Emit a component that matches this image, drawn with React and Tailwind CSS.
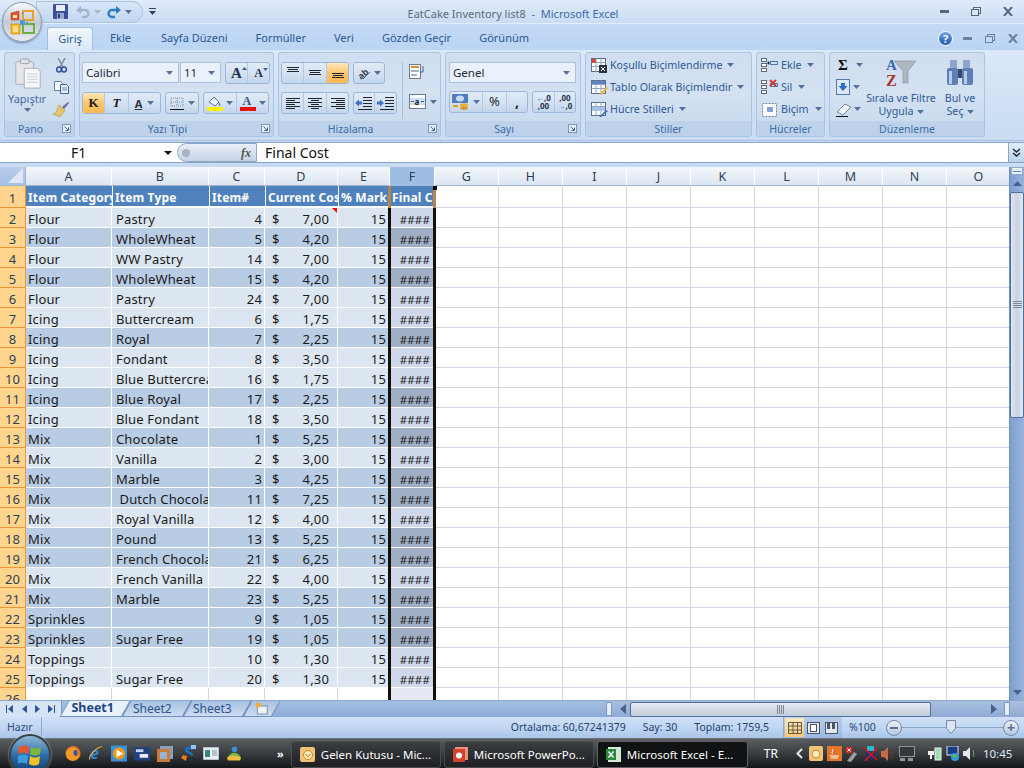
import React from 'react';

const font = { fontFamily: '"Noto Sans", sans-serif' };

// [category, type, item, cost, dark band]
const rows = [
  ['Flour', 'Pastry', 4, '7,00', 0],
  ['Flour', 'WholeWheat', 5, '4,20', 1],
  ['Flour', 'WW Pastry', 14, '7,00', 0],
  ['Flour', 'WholeWheat', 15, '4,20', 1],
  ['Flour', 'Pastry', 24, '7,00', 0],
  ['Icing', 'Buttercream', 6, '1,75', 0],
  ['Icing', 'Royal', 7, '2,25', 1],
  ['Icing', 'Fondant', 8, '3,50', 0],
  ['Icing', 'Blue Buttercream', 16, '1,75', 0],
  ['Icing', 'Blue Royal', 17, '2,25', 1],
  ['Icing', 'Blue Fondant', 18, '3,50', 0],
  ['Mix', 'Chocolate', 1, '5,25', 1],
  ['Mix', 'Vanilla', 2, '3,00', 0],
  ['Mix', 'Marble', 3, '4,25', 1],
  ['Mix', '\u00a0Dutch Chocolate', 11, '7,25', 1],
  ['Mix', 'Royal Vanilla', 12, '4,00', 0],
  ['Mix', 'Pound', 13, '5,25', 1],
  ['Mix', 'French Chocolate', 21, '6,25', 1],
  ['Mix', 'French Vanilla', 22, '4,00', 0],
  ['Mix', 'Marble', 23, '5,25', 1],
  ['Sprinkles', '', 9, '1,05', 1],
  ['Sprinkles', 'Sugar Free', 19, '1,05', 1],
  ['Toppings', '', 10, '1,30', 0],
  ['Toppings', 'Sugar Free', 20, '1,30', 0],
];

const extraCols = ['G', 'H', 'I', 'J', 'K', 'L', 'M', 'N', 'O'];

const Caret = ({ className = 'text-[#56719c]' }) => (
  <svg width="7" height="4" viewBox="0 0 7 4" className={`shrink-0 ${className}`}><path d="M0 0h7L3.5 4z" fill="currentColor" /></svg>
);

const Launcher = () => (
  <svg width="9" height="9" viewBox="0 0 9 9" className="shrink-0">
    <rect x="0.5" y="0.5" width="8" height="8" fill="#e6eef8" stroke="#7c97bd" />
    <path d="M2.5 2.5l3.5 3.5M6.5 3.5v3h-3" fill="none" stroke="#49648c" />
  </svg>
);

const Group = ({ width, label, launcher, className = '', children }) => (
  <div className="flex flex-col shrink-0 h-[85px] rounded-[3px] border border-[#a9c4e4] bg-linear-to-b from-[#cfdef0] via-[#d3e1f1] to-[#c6d9ee]" style={{ width }}>
    <div className={`h-[68px] ${className}`}>{children}</div>
    <div className={`h-[15px] flex items-center justify-center relative pt-[2px] bg-linear-to-b from-[#bed2e9] to-[#bdd1ea] rounded-b-[3px] text-[10.5px] text-[#3e6aaa] ${launcher ? 'pr-[18px]' : ''}`}>
      {label}
      {launcher && <span className="absolute right-[3px] top-[3px] flex"><Launcher /></span>}
    </div>
  </div>
);

const BtnRow = ({ className = '', children }) => (
  <div className={`flex h-[22px] rounded-[3px] border border-[#9db7d8] bg-linear-to-b from-[#e1ebf7] via-[#d5e2f2] to-[#c3d5ec] overflow-hidden ${className}`}>{children}</div>
);

const Btn = ({ w = 24, active, children }) => (
  <div className={`flex items-center justify-center gap-[3px] shrink-0 border-r border-[#b5c9e2] last:border-r-0 ${active ? 'bg-linear-to-b from-[#fde7b9] via-[#fbc66f] to-[#fdb84f]' : ''}`} style={{ width: w }}>{children}</div>
);

const Lines = ({ kind, valign }) => {
  const y0 = valign === 'top' ? 1 : valign === 'mid' ? 4 : 7;
  if (valign) {
    return (
      <svg width="16" height="14" viewBox="0 0 16 14">
        <path d={`M2 ${y0 + 0.5}h12M3 ${y0 + 2.5}h10M2 ${y0 + 4.5}h12`} stroke="#20242c" />
      </svg>
    );
  }
  const seg = {
    left: 'M1 1.5h14M1 3.5h9M1 5.5h14M1 7.5h9M1 9.5h14M1 11.5h9',
    center: 'M1 1.5h14M4 3.5h8M1 5.5h14M4 7.5h8M1 9.5h14M4 11.5h8',
    right: 'M1 1.5h14M6 3.5h9M1 5.5h14M6 7.5h9M1 9.5h14M6 11.5h9',
  };
  return <svg width="16" height="13" viewBox="0 0 16 13"><path d={seg[kind]} stroke="#20242c" /></svg>;
};

const Indent = ({ flip }) => (
  <svg width="18" height="15" viewBox="0 0 18 15">
    <path d="M8 1.5h9M8 4.5h9M8 7.5h9M8 10.5h9M3 13.5h14" stroke="#20242c" />
    <path d={flip ? 'M7 7L3 3.5v2H0v3h3v2z' : 'M0 7l4-3.5v2h3v3H4v2z'} fill="#3f74c6" />
  </svg>
);

const OfficeLogo = () => (
  <div className="relative w-[40px] h-[40px] rounded-full border border-[#8b9bb0] bg-linear-to-b from-[#f7f8fa] via-[#c3cad4] to-[#e8ecf0] flex items-center justify-center shadow-[0_1px_2px_#6d83a5]">
    <svg width="25" height="25" viewBox="0 0 25 25">
      <path d="M1 3l8-2v9H1z" fill="#e8552b" stroke="#9c3018" strokeWidth="0.5" />
      <path d="M3 5h4v3H3z" fill="#fde6c8" />
      <path d="M13 1h10v9H13z" fill="none" stroke="#e9a028" strokeWidth="2" />
      <path d="M13 14h11v9H13z" fill="none" stroke="#6ab044" strokeWidth="2" />
      <path d="M1 14h9v10H1z" fill="#f4b826" stroke="#b87b13" strokeWidth="0.5" />
      <path d="M3 16h5v6H3z" fill="#fbe08c" />
      <path d="M10 10h5v5h-5z" fill="#4e9bd6" />
      <circle cx="12.5" cy="3" r="1" fill="#4e9bd6" /><circle cx="17" cy="12.5" r="1" fill="#4e9bd6" />
    </svg>
  </div>
);

const Save = () => (
  <svg width="15" height="15" viewBox="0 0 15 15">
    <rect width="15" height="15" rx="1" fill="#3d4f9f" />
    <rect x="3" y="1" width="9" height="6" fill="#e8edf7" />
    <rect x="4" y="9" width="7" height="6" fill="#9ba9cf" /><rect x="5" y="10" width="2" height="4" fill="#2c3a78" />
  </svg>
);

const Curve = ({ color, flip }) => (
  <svg width="14" height="14" viewBox="0 0 14 14" style={flip ? { transform: 'scaleX(-1)' } : undefined}>
    <path d="M3 5h6a3 3 0 0 1 0 7H6" fill="none" stroke={color} strokeWidth="2.4" />
    <path d="M5 1v8L0 5z" fill={color} />
  </svg>
);

const Clipboard = () => (
  <svg width="28" height="31" viewBox="0 0 28 33">
    <rect x="1" y="4" width="19" height="24" rx="1" fill="#e4e6ea" stroke="#a8adb6" />
    <rect x="6" y="1" width="9" height="5" rx="1" fill="#dfe2e6" stroke="#9aa0aa" />
    <path d="M10 11h14l3 3v18H10z" fill="#f5f7fa" stroke="#a7adb8" />
    <path d="M13 17h11M13 20h11M13 23h11M13 26h11" stroke="#c8cdd6" />
  </svg>
);

const Scissors = () => (
  <svg width="11" height="15" viewBox="0 0 11 15">
    <path d="M2 0l5 9M9 0L4 9" stroke="#7f8792" strokeWidth="1.4" />
    <circle cx="3" cy="11.5" r="2.4" fill="none" stroke="#2f4f9f" strokeWidth="1.5" />
    <circle cx="8" cy="11.5" r="2.4" fill="none" stroke="#2f4f9f" strokeWidth="1.5" />
  </svg>
);

const Copy = () => (
  <svg width="15" height="13" viewBox="0 0 15 13">
    <path d="M0.5 0.5h6l2 2v7h-8z" fill="#fff" stroke="#5a7fb3" />
    <path d="M6.5 3.5h6l2 2v7h-8z" fill="#eaf1fa" stroke="#38619e" />
    <path d="M8 7h5M8 9h5" stroke="#6a8dbd" />
  </svg>
);

const Brush = () => (
  <svg width="16" height="15" viewBox="0 0 16 15">
    <path d="M9 5l6-5 1 1-5 6z" fill="#7a5ea8" />
    <path d="M6 3l6 5-5 7-7-3c3 0 4-4 6-9z" fill="#e6c46b" stroke="#9c8239" strokeWidth="0.5" />
  </svg>
);

const Grow = ({ size, up }) => (
  <span className="relative font-bold text-[#20304a] leading-none" style={{ fontFamily: '"Liberation Serif", serif', fontSize: size }}>
    A
    <svg width="5" height="3" viewBox="0 0 5 3" className="absolute -right-[5px] top-[1px] text-[#3e5f90]"><path d={up ? 'M0 3h5L2.5 0z' : 'M0 0h5L2.5 3z'} fill="currentColor" /></svg>
  </span>
);

const Combo = ({ w, text, gap = '' }) => (
  <div className={`flex items-center justify-between h-[21px] pt-[1px] border border-[#abc1de] bg-[#eaf1fb] px-[3px] text-[11.5px] text-[#1f2a3a] ${gap}`} style={{ width: w }}>
    <span>{text}</span>
    <span className="mr-[2px] flex"><Caret /></span>
  </div>
);

const Sm = ({ w, h, children }) => <svg width={w} height={h} viewBox={`0 0 ${w} ${h}`} className="shrink-0">{children}</svg>;

const StyleIcon = ({ kind }) => (
  <Sm w={17} h={16}>
    <rect x="0.5" y="1.5" width="14" height="13" fill="#fff" stroke="#5a6d8a" />
    <path d="M0.5 5.5h14M0.5 9.5h14M5 1.5v13M10 1.5v13" stroke="#8fa4c2" />
    {kind === 'cond' && <><rect x="1" y="2" width="4" height="4" fill="#d44a3a" /><rect x="8" y="8" width="8" height="8" fill="#30363f" /><path d="M10 10l4 4M14 10l-4 4" stroke="#fff" /></>}
    {kind === 'table' && <><rect x="1" y="2" width="13" height="3" fill="#5b84c0" /><path d="M9 15l6-7 2 1-6 7z" fill="#e6b53c" /></>}
    {kind === 'cell' && <><rect x="1" y="6" width="13" height="4" fill="#a9c1e4" /><path d="M8 16l7-7 2 1-7 6z" fill="#3c6fc0" /></>}
  </Sm>
);

const CellIcon = ({ kind }) => {
  if (kind === 'format') {
    return (
      <Sm w={17} h={16}>
        <rect x="1.5" y="2.5" width="14" height="13" fill="#fff" stroke="#7d8794" strokeDasharray="2 1" />
        <rect x="6" y="6" width="6" height="5" fill="#7ba4dc" />
      </Sm>
    );
  }
  return (
    <Sm w={17} h={16}>
      <rect x="0.5" y="1.5" width="5" height="3" fill="#fff" stroke="#5d6a7c" />
      <rect x="0.5" y="6.5" width="5" height="3" fill="#fff" stroke="#5d6a7c" />
      <rect x="0.5" y="11.5" width="5" height="3" fill="#fff" stroke="#5d6a7c" />
      <rect x="9.5" y="4.5" width="7" height="3" fill="#cfe0f5" stroke="#4e78ad" />
      {kind === 'add' ? <path d="M6 6h3M7.5 4.5v3" stroke="#20242c" /> : <path d="M9 1l6 6M15 1L9 7" stroke="#d8392b" strokeWidth="2" />}
    </Sm>
  );
};

const Funnel = () => (
  <svg width="30" height="30" viewBox="0 0 30 30" className="shrink-0">
    <path d="M8 4h22l-8 10v12h-5V14z" fill="#aeb6c0" stroke="#7a828e" strokeWidth="0.5" />
    <text x="0" y="13" fontSize="15" fontWeight="700" fill="#3f68b0" fontFamily="Liberation Serif, serif">A</text>
    <text x="0" y="29" fontSize="16" fontWeight="700" fill="#a63a30" fontFamily="Liberation Serif, serif">Z</text>
  </svg>
);

const Binoculars = () => (
  <svg width="28" height="26" viewBox="0 0 28 26" className="shrink-0">
    <rect x="1" y="9" width="11" height="17" rx="2" fill="#5d7fb4" />
    <rect x="16" y="9" width="11" height="17" rx="2" fill="#5d7fb4" />
    <rect x="4" y="1" width="7" height="8" rx="1" fill="#8ea6cc" /><rect x="17" y="1" width="7" height="8" rx="1" fill="#8ea6cc" />
    <rect x="12" y="10" width="4" height="9" fill="#33496f" />
    <rect x="3" y="12" width="3" height="13" fill="#b6cbe8" /><rect x="18" y="12" width="3" height="13" fill="#b6cbe8" />
  </svg>
);

const Ribbon = () => (
  <div className="flex gap-[4px] h-[91px] pl-[4px] pt-[2px] bg-linear-to-b from-[#dbe8f8] to-[#c9dcf2] border-b border-[#a6c0de] text-[#3e6aaa]">
    <Group width={71} label="Pano" launcher className="flex pt-[5px]">
      <div className="w-[44px] flex flex-col items-center">
        <div className="h-[34px] pl-[2px]"><Clipboard /></div>
        <span className="text-[11px] leading-[13px] text-[#3e6aaa]">Yapıştır</span>
        <span className="mt-[3px] flex"><Caret /></span>
      </div>
      <div className="flex flex-col items-center gap-[8px] w-[20px] ml-[2px]">
        <Scissors /><Copy /><Brush />
      </div>
    </Group>

    <Group width={195} label="Yazı Tipi" launcher className="pt-[9px] pl-[2px]">
      <div className="flex">
        <Combo w={97} text="Calibri" />
        <Combo w={41} text="11" gap="ml-[1px]" />
        <BtnRow className="ml-[4px]">
          <Btn w={22}><Grow size={15} up /></Btn>
          <Btn w={21}><Grow size={12} /></Btn>
        </BtnRow>
      </div>
      <div className="flex mt-[8px]">
        <BtnRow>
          <Btn w={22} active><span className="font-bold text-[13px] text-[#1b1b1b]" style={{ fontFamily: '"Liberation Serif", serif' }}>K</span></Btn>
          <Btn w={24}><span className="font-bold italic text-[13px] text-[#1b1b1b]" style={{ fontFamily: '"Liberation Serif", serif' }}>T</span></Btn>
          <Btn w={31}><span className="font-bold text-[11px] underline text-[#2a3446] leading-none">A</span><span className="ml-[2px] flex"><Caret /></span></Btn>
        </BtnRow>
        <BtnRow className="ml-[4px] w-[34px]">
          <div className="flex items-center gap-[4px] pl-[4px]">
            <svg width="14" height="13" viewBox="0 0 14 13"><path d="M1 1h12v8H1zM7 1v8M1 5h12" fill="none" stroke="#7f8ea4" strokeDasharray="1 1" /><path d="M0 12.5h14" stroke="#111" /></svg>
            <Caret />
          </div>
        </BtnRow>
        <BtnRow className="ml-[4px]">
          <Btn w={33}>
            <svg width="16" height="16" viewBox="0 0 16 16"><path d="M2 7l5-5 5 5-4 4z" fill="#eef2f8" stroke="#6b7686" /><path d="M12 7c1 2 2 3 1 4-1 0-2-1-1-4z" fill="#5e7fb3" /><rect y="12" width="16" height="4" fill="#fff200" /></svg>
            <Caret />
          </Btn>
          <Btn w={31}>
            <svg width="16" height="16" viewBox="0 0 16 16"><text x="2.5" y="10" fontSize="12" fontWeight="700" fill="#39507a" fontFamily="Liberation Serif, serif">A</text><rect y="12" width="16" height="4" fill="#e80d0d" /></svg>
            <Caret />
          </Btn>
        </BtnRow>
      </div>
    </Group>

    <Group width={163} label="Hizalama" launcher className="flex pt-[9px] pl-[2px]">
      <div className="flex flex-col gap-[8px]">
        <div className="flex gap-[4px]">
          <BtnRow>
            <Btn w={22}><Lines valign="top" /></Btn>
            <Btn w={23}><Lines valign="mid" /></Btn>
            <Btn w={21} active><Lines valign="bot" /></Btn>
          </BtnRow>
          <BtnRow>
            <Btn w={30}>
              <svg width="14" height="14" viewBox="0 0 14 14"><text x="0" y="11" fontSize="9" fontWeight="700" fill="#3a4656" transform="rotate(-40 6 7)">ab</text><path d="M6 13l7-7" stroke="#5a6a80" /></svg>
              <Caret />
            </Btn>
          </BtnRow>
        </div>
        <div className="flex gap-[4px]">
          <BtnRow>
            <Btn w={22}><Lines kind="left" /></Btn>
            <Btn w={23}><Lines kind="center" /></Btn>
            <Btn w={21}><Lines kind="right" /></Btn>
          </BtnRow>
          <BtnRow>
            <Btn w={21}><Indent /></Btn>
            <Btn w={21}><Indent flip /></Btn>
          </BtnRow>
        </div>
      </div>
      <div className="w-px h-[57px] bg-[#a9bfdb] mx-[5px]" />
      <div className="flex flex-col gap-[15px] pl-[1px] pt-[2px]">
        <svg width="17" height="15" viewBox="0 0 17 15"><rect x="0.5" y="0.5" width="11" height="14" fill="#fff" stroke="#6d7a8c" /><path d="M2 3h8" stroke="#d08b3c" strokeWidth="2" /><path d="M2 7h8M2 11h6" stroke="#50627c" /><path d="M14 2v6h-3" fill="none" stroke="#3e5f90" /></svg>
        <div className="flex items-center gap-[4px]">
          <svg width="17" height="15" viewBox="0 0 17 15"><rect x="0.5" y="0.5" width="16" height="14" fill="#fff" stroke="#6d7a8c" /><rect x="1" y="4" width="15" height="7" fill="#cfdff3" /><text x="5.5" y="10.5" fontSize="8" fontWeight="700" fill="#222">a</text><path d="M2 7.5h3M12 7.5h3" stroke="#3b5f96" /></svg>
          <Caret />
        </div>
      </div>
    </Group>

    <Group width={136} label="Sayı" launcher className="pt-[9px] pl-[3px]">
      <Combo w={127} text="Genel" />
      <div className="flex gap-[4px] mt-[8px]">
        <BtnRow>
          <Btn w={33}>
            <svg width="18" height="17" viewBox="0 0 18 17"><rect width="16" height="9" fill="#4f7dbf" /><ellipse cx="8" cy="4.5" rx="4" ry="3" fill="#c9dcf3" /><ellipse cx="12" cy="11" rx="4" ry="1.8" fill="#e8b130" /><ellipse cx="12" cy="14" rx="4" ry="1.8" fill="#d79a1e" /><path d="M1 12h5" stroke="#d79a1e" strokeWidth="2" /></svg>
            <Caret />
          </Btn>
          <Btn w={24}><span className="text-[13px] text-[#1f2a3a]">%</span></Btn>
          <Btn w={20}><span className="text-[14px] font-bold text-[#1f2a3a] leading-none">,</span></Btn>
        </BtnRow>
        <BtnRow>
          <Btn w={22}><span className="text-[8px] font-bold leading-[8px] text-[#26354e] text-center"><span className="text-[#3c74c8]">←</span>,0<br />,00</span></Btn>
          <Btn w={20}><span className="text-[8px] font-bold leading-[8px] text-[#26354e] text-center">,00<br /><span className="text-[#3c74c8]">→</span>,0</span></Btn>
        </BtnRow>
      </div>
    </Group>

    <Group width={167} label="Stiller" className="flex flex-col gap-[6px] pt-[4px] pl-[5px] text-[10.7px] text-[#2f5a96]">
      <div className="flex items-center h-[16px] gap-[2px]"><StyleIcon kind="cond" /><span>Koşullu Biçimlendirme</span><span className="ml-[3px] flex"><Caret /></span></div>
      <div className="flex items-center h-[16px] gap-[2px]"><StyleIcon kind="table" /><span>Tablo Olarak Biçimlendir</span><span className="ml-[3px] flex"><Caret /></span></div>
      <div className="flex items-center h-[16px] gap-[2px]"><StyleIcon kind="cell" /><span>Hücre Stilleri</span><span className="ml-[3px] flex"><Caret /></span></div>
    </Group>

    <Group width={69} label="Hücreler" className="flex flex-col gap-[6px] pt-[4px] pl-[4px] text-[10.7px] text-[#2f5a96]">
      <div className="flex items-center h-[16px] gap-[3px]"><CellIcon kind="add" /><span>Ekle</span><span className="ml-[3px] flex"><Caret /></span></div>
      <div className="flex items-center h-[16px] gap-[3px]"><CellIcon kind="del" /><span>Sil</span><span className="ml-[3px] flex"><Caret /></span></div>
      <div className="flex items-center h-[16px] gap-[3px]"><CellIcon kind="format" /><span>Biçim</span><span className="ml-[3px] flex"><Caret /></span></div>
    </Group>

    <Group width={156} label="Düzenleme" className="flex pl-[6px] text-[10.7px] text-[#2f5a96]">
      <div className="flex flex-col gap-[6px] pt-[4px] w-[27px]">
        <div className="flex items-center h-[16px] gap-[2px] pl-[2px]"><span className="text-[15px] font-bold text-[#111] leading-none w-[14px]" style={{ fontFamily: '"Liberation Serif", serif' }}>Σ</span><span className="ml-[2px] flex"><Caret /></span></div>
        <div className="flex items-center h-[16px] gap-[3px]"><Sm w={14} h={16}><rect x="0.5" y="0.5" width="13" height="15" fill="#dbe8f8" stroke="#5079b3" /><path d="M7 12L2.5 7h2.5V4h4v3h2.5z" fill="#2f6cc4" /></Sm><span className="flex"><Caret /></span></div>
        <div className="flex items-center h-[16px] gap-[2px]"><Sm w={16} h={15}><path d="M1 10l8-8 6 3-8 8z" fill="#eef1f5" stroke="#7b8594" /><path d="M0 14.5h12" stroke="#111" /></Sm><Caret /></div>
      </div>
      <div className="flex flex-col items-center w-[72px] ml-[2px] pt-[4px]">
        <Funnel />
        <span className="mt-[5px] leading-[13px] whitespace-nowrap">Sırala ve Filtre</span>
        <span className="flex items-center gap-[3px] leading-[13px]">Uygula<Caret /></span>
      </div>
      <div className="flex flex-col items-center w-[38px] ml-[4px] pt-[4px]">
        <div className="h-[30px] pt-[2px]"><Binoculars /></div>
        <span className="mt-[5px] leading-[13px] whitespace-nowrap">Bul ve</span>
        <span className="flex items-center gap-[3px] leading-[13px]">Seç<Caret /></span>
      </div>
    </Group>
  </div>
);

const MinRestoreClose = ({ color, gap, onBg }) => (
  <div className={`flex items-center ${gap}`}>
    <svg width="9" height="3" viewBox="0 0 9 3"><rect width="9" height="3" fill={color} /></svg>
    <svg width="10" height="9" viewBox="0 0 10 9"><rect x="2.5" y="0.5" width="7" height="6" fill="none" stroke={color} /><rect x="0.5" y="2.5" width="7" height="6" fill={onBg} stroke={color} /></svg>
    <svg width="10" height="9" viewBox="0 0 10 9"><path d="M1 0l8 9M9 0L1 9" stroke={color} strokeWidth="2" /></svg>
  </div>
);

const TitleBar = () => (
  <div className="relative h-[24px] flex items-center bg-linear-to-b from-[#dfebf9] to-[#c9dcf3] border-b border-[#e3eefb]">
    <div className="flex items-center ml-[36px] h-[22px] w-[107px] pl-[16px] gap-[6px] rounded-r-full border border-[#a9c3e3] bg-linear-to-b from-[#d9e7f8] to-[#c2d7f0]">
      <Save />
      <span className="flex items-center gap-[4px] ml-[2px]"><Curve color="#a4b4c9" /><Caret className="text-[#a4b4c9]" /></span>
      <span className="flex items-center gap-[4px]"><Curve color="#2f7dbd" flip /><Caret /></span>
    </div>
    <svg width="7" height="7" viewBox="0 0 7 7" className="ml-[6px] text-[#34465f]"><path d="M0 0h7v1H0zM0 3h7L3.5 7z" fill="currentColor" /></svg>
    <div className="absolute left-0 right-0 top-[5px] pl-[2px] text-center text-[11px] leading-[17px]">
      <span className="text-[#5e6a7a]">EatCake Inventory list8</span><span className="text-[#3e6aaa]">&nbsp; - &nbsp;Microsoft Excel</span>
    </div>
    <div className="ml-auto mr-[11px]"><MinRestoreClose color="#54677f" gap="gap-[22px]" onBg="#d6e4f5" /></div>
    <div className="absolute left-[2px] top-[2px] z-10"><OfficeLogo /></div>
  </div>
);

const tabs = [
  ['Ekle', 'ml-[17px]'],
  ['Sayfa Düzeni', 'ml-[30px]'],
  ['Formüller', 'ml-[28px]'],
  ['Veri', 'ml-[28px]'],
  ['Gözden Geçir', 'ml-[28px]'],
  ['Görünüm', 'ml-[28px]'],
];

const TabStrip = () => (
  <div className="flex items-end h-[26px] bg-linear-to-b from-[#c4daf6] to-[#bad4f4] text-[11px] text-[#2a5694]">
    <div className="ml-[47px] w-[46px] h-[23px] flex items-center justify-center rounded-t-[3px] border border-b-0 border-[#a3bfdf] bg-linear-to-b from-[#f2f7fd] to-[#dbe8f8]">Giriş</div>
    {tabs.map(([t, m]) => <div key={t} className={`${m} h-[23px] flex items-center`}>{t}</div>)}
    <div className="ml-auto flex items-center h-[24px] mr-[6px] gap-[10px]">
      <div className="w-[15px] h-[15px] rounded-full bg-linear-to-b from-[#6fa4e6] to-[#2258ad] border border-[#fff] text-white text-[11px] font-bold flex items-center justify-center leading-none">?</div>
      <MinRestoreClose color="#6e8099" gap="gap-[13px]" onBg="#c4daf6" />
    </div>
  </div>
);

const FormulaBar = () => (
  <div className="h-[26px] bg-[#c8dbf2] pt-[1px]">
    <div className="h-[21px] flex border-y border-[#86a5c9] bg-white text-[14px] text-[#111]">
      <div className="w-[177px] flex items-center relative">
        <span className="ml-[71px] leading-none">F1</span>
        <svg width="8" height="4" viewBox="0 0 8 4" className="absolute left-[164px] top-[8px]"><path d="M0 0h8L4 4z" fill="#111" /></svg>
      </div>
      <div className="w-[80px] relative flex items-center rounded-l-full border border-[#8fa9c9] bg-linear-to-b from-[#e8eff8] to-[#c6d4e6]">
        <span className="w-[8px] h-[8px] rounded-full bg-[#aab5c4] ml-[4px]" />
        <span className="ml-auto mr-[5px] italic font-bold text-[12px] text-[#555] leading-none" style={{ fontFamily: '"Liberation Serif", serif' }}>fx</span>
      </div>
      <div className="flex-1 pl-[8px] flex items-center leading-none">Final Cost</div>
      <div className="w-[16px] flex items-center justify-center border-l border-[#86a5c9] bg-linear-to-b from-[#e3edf9] to-[#bcd1ea]">
        <svg width="9" height="10" viewBox="0 0 9 10"><path d="M1 1l3.5 3L8 1M1 5l3.5 3L8 5" fill="none" stroke="#1d2733" strokeWidth="1.4" /></svg>
      </div>
    </div>
  </div>
);

const colA = 'w-[86px]';
const colB = 'w-[97px]';
const colC = 'w-[56px]';
const colD = 'w-[73px]';
const colE = 'w-[52px]';
const colF = 'w-[45px]';

const ColHead = ({ w, children, active }) => (
  <div className={`${w} shrink-0 h-[19px] pt-[3px] flex items-center justify-center border-r border-[#fff] border-b text-[12.5px] text-[#2f3f56] ${active ? 'bg-[#9dbde3] border-b-[#9dbde3]' : 'bg-linear-to-b from-[#f4f7fb] to-[#dbe5f1] border-b-[#9eb6ce]'}`}>{children}</div>
);

const RowHead = ({ n, h = 'h-[20px]' }) => (
  <div className={`w-[26px] shrink-0 ${h} pt-[3px] flex items-center justify-center bg-[#ffd58d] border-r border-b border-[#f29536] text-[13px] text-[#2f3f56]`}>{n}</div>
);

const Blank = () => extraCols.map((c) => <div key={c} className="w-[64px] shrink-0 border-r border-b border-[#d0d7e5]" />);

const Sheet = () => (
  <div className="flex h-[533px] bg-white">
    <div className="relative w-[1009px] overflow-hidden text-[13px] tracking-[0.15px] leading-none text-[#1a1a1a]">
      <div className="flex w-[1100px]">
        <div className="w-[26px] shrink-0 h-[19px] bg-linear-to-b from-[#b7cdea] to-[#a5c1e6] border-r border-b border-[#9eb6ce] flex items-end justify-end p-[2px]">
          <svg width="15" height="15" viewBox="0 0 15 15"><path d="M15 0v15H0z" fill="#dfe8f4" /></svg>
        </div>
        <ColHead w={colA}>A</ColHead>
        <ColHead w={colB}>B</ColHead>
        <ColHead w={colC}>C</ColHead>
        <ColHead w={colD}>D</ColHead>
        <ColHead w={colE}>E</ColHead>
        <ColHead w={colF} active>F</ColHead>
        {extraCols.map((c) => <ColHead key={c} w="w-[64px]">{c}</ColHead>)}
      </div>

      <div className="flex w-[1100px] h-[22px]">
        <RowHead n={1} h="h-[22px]" />
        <div className="flex bg-[#4f81bd] text-white font-bold text-[12px] border-b-2 border-white">
          <div className={`${colA} shrink-0 overflow-hidden whitespace-nowrap pl-[2px] pt-[3px] flex items-center`}>Item Category</div>
          <div className={`${colB} shrink-0 overflow-hidden whitespace-nowrap pl-[2px] pt-[3px] flex items-center border-l border-white`}>Item Type</div>
          <div className={`${colC} shrink-0 overflow-hidden whitespace-nowrap pl-[2px] pt-[3px] flex items-center border-l border-white`}>Item#</div>
          <div className={`${colD} shrink-0 overflow-hidden whitespace-nowrap pl-[2px] pt-[3px] flex items-center border-l border-white`}>Current Cost</div>
          <div className={`${colE} shrink-0 overflow-hidden whitespace-nowrap pl-[2px] pt-[3px] flex items-center border-l border-white`}>% Markup</div>
          <div className={`${colF} shrink-0 overflow-hidden whitespace-nowrap pl-[2px] pt-[3px] flex items-center`}>Final Cost</div>
        </div>
        <Blank />
      </div>

      {rows.map((r, i) => {
        const bg = r[4] ? 'bg-[#b8cce4]' : 'bg-[#dce6f1]';
        const sel = r[4] ? 'bg-[#a0afc6]' : 'bg-[#cfd8ea]';
        return (
          <div key={i} className="flex w-[1100px] h-[20px]">
            <RowHead n={i + 2} />
            <div className={`${colA} ${bg} shrink-0 overflow-hidden whitespace-nowrap flex items-center pl-[2px] pt-[4px] border-r border-b border-white`}>{r[0]}</div>
            <div className={`${colB} ${bg} shrink-0 overflow-hidden whitespace-nowrap flex items-center pl-[4px] pt-[4px] border-r border-b border-white`}>{r[1]}</div>
            <div className={`${colC} ${bg} shrink-0 flex items-center justify-end pr-[2px] pt-[4px] border-r border-b border-white`}>{r[2]}</div>
            <div className={`${colD} ${bg} relative shrink-0 flex items-center justify-between pl-[7px] pr-[8px] pt-[4px] border-r border-b border-white`}>
              <span>$</span><span>{r[3]}</span>
              {i === 0 && <svg width="5" height="5" viewBox="0 0 5 5" className="absolute right-0 top-0"><path d="M0 0h5v5z" fill="#f00" /></svg>}
            </div>
            <div className={`${colE} ${bg} shrink-0 flex items-center justify-end pr-[3px] pt-[4px] border-r border-b border-white`}>15</div>
            <div className={`${colF} ${sel} shrink-0 flex items-center justify-end pr-[5px] pt-[4px] text-[11.5px] border-b border-white`}>####</div>
            <Blank />
          </div>
        );
      })}

      <div className="flex w-[1100px] h-[20px]">
        <RowHead n={26} />
        <div className={`${colA} shrink-0 border-r border-b border-[#d0d7e5]`} />
        <div className={`${colB} shrink-0 border-r border-b border-[#d0d7e5]`} />
        <div className={`${colC} shrink-0 border-r border-b border-[#d0d7e5]`} />
        <div className={`${colD} shrink-0 border-r border-b border-[#d0d7e5]`} />
        <div className={`${colE} shrink-0 border-r border-b border-[#d0d7e5]`} />
        <div className={`${colF} shrink-0 bg-[#e6e9f4]`} />
        <Blank />
      </div>

      {/* selected column F, drawn over the cells */}
      <div className="absolute left-[388px] top-[19px] bottom-0 w-[48px] border-x-[3px] border-[#14100c]" />
      <div className="absolute left-[388px] top-[19px] h-[22px] w-[48px] border-x-[3px] border-[#b5854a]" />
      <div className="absolute left-[433px] top-[19px] w-[4px] h-[4px] bg-black" />
    </div>

    <div className="w-[15px] flex flex-col bg-linear-to-r from-[#7f9fcf] to-[#97b3dc] border-l border-[#6d8fbf]">
      <div className="h-[8px] mx-[1px] bg-[#e6eef8] border border-[#8fa9cd] flex items-center justify-center"><div className="h-px w-[8px] bg-[#5f86bd]" /></div>
      <div className="h-[17px] flex items-center justify-center"><svg width="9" height="5" viewBox="0 0 9 5"><path d="M0 5h9L4.5 0z" fill="#46618c" /></svg></div>
      <div className="h-[226px] rounded-[2px] border border-[#4d6f9e] bg-linear-to-r from-[#dfe6ef] via-[#c8d3e2] to-[#e3e8ef] flex items-center justify-center">
        <svg width="9" height="8" viewBox="0 0 9 8"><path d="M0 .5h9M0 2.5h9M0 4.5h9M0 6.5h9" stroke="#7d8896" /></svg>
      </div>
      <div className="mt-auto h-[15px] flex items-center justify-center"><svg width="9" height="5" viewBox="0 0 9 5"><path d="M0 0h9L4.5 5z" fill="#46618c" /></svg></div>
    </div>
  </div>
);

const Nav = ({ d }) => <svg width="8" height="8" viewBox="0 0 8 8"><path d={d} fill="#2f5590" /></svg>;

const SheetTab = ({ w, active, pl, children }) => (
  <div className={`h-[16px] shrink-0 skew-x-[-29deg] border-x border-b border-[#6f8fbd] flex items-center ${active ? 'bg-[#e8f0fb] font-bold text-[#1e4682]' : 'bg-linear-to-b from-[#a9c0e0] to-[#cdddf1] text-[#28548f]'}`} style={{ width: w }}>
    <span className={`skew-x-[29deg] leading-none ${active ? 'text-[12.5px]' : 'text-[12px]'}`} style={{ marginLeft: pl }}>{children}</span>
  </div>
);

const BottomBar = () => (
  <div className="h-[17px] flex bg-linear-to-b from-[#a5bfe2] to-[#8cabd8] border-t border-[#8ba8cd]">
    <div className="w-[62px] h-[16px] shrink-0 flex items-center justify-around px-[3px] bg-[#d5e3f5] border-r border-[#7d9ac4]">
      <Nav d="M0 0h1v8H0zM2 4l5-4v8z" />
      <Nav d="M2 4l5-4v8z" />
      <Nav d="M7 4L2 0v8z" />
      <Nav d="M8 0H7v8h1zM6 4L1 0v8z" />
    </div>
    <div className="flex ml-[2px]">
      <SheetTab w={62} pl={6} active>Sheet1</SheetTab>
      <SheetTab w={61} pl={6}>Sheet2</SheetTab>
      <SheetTab w={60} pl={5}>Sheet3</SheetTab>
      <div className="w-[29px] h-[16px] shrink-0 skew-x-[-29deg] bg-linear-to-b from-[#a9c0e0] to-[#cdddf1] border-x border-b border-[#6f8fbd] flex items-center justify-center">
        <svg width="13" height="13" viewBox="0 0 13 13" className="skew-x-[29deg]"><rect x="2" y="4" width="10" height="8" fill="#eef2f8" stroke="#7f8ea4" /><circle cx="3" cy="3" r="2.5" fill="#f1b031" /></svg>
      </div>
    </div>
    <div className="ml-auto w-[419px] flex items-center h-[16px] bg-linear-to-b from-[#a9bfdd] to-[#90abd5]">
      <div className="w-[6px] h-[14px] ml-[1px] bg-[#e8eff9] border border-[#7d99c2]" />
      <svg width="6" height="10" viewBox="0 0 6 10" className="ml-[8px]"><path d="M6 0v10L0 5z" fill="#46618c" /></svg>
      <div className="ml-[4px] w-[301px] h-[15px] rounded-[2px] border border-[#4d6f9e] bg-linear-to-b from-[#e6ebf2] via-[#d3dbe6] to-[#c2ccda] flex items-center justify-center">
        <svg width="8" height="9" viewBox="0 0 8 9"><path d="M.5 0v9M2.5 0v9M4.5 0v9M6.5 0v9" stroke="#7d8896" /></svg>
      </div>
      <svg width="6" height="10" viewBox="0 0 6 10" className="ml-[60px]"><path d="M0 0v10l6-5z" fill="#46618c" /></svg>
      <div className="w-[6px] h-[14px] ml-[7px] bg-[#e8eff9] border border-[#7d99c2]" />
    </div>
  </div>
);

const StatusBar = () => (
  <div className="h-[21px] flex items-center bg-linear-to-b from-[#cfe0f7] via-[#c1d6f2] to-[#a9c5ea] text-[10.5px] leading-none text-[#1f3e70] whitespace-nowrap">
    <div className="w-[42px] shrink-0 h-full flex items-center pl-[7px] border-r border-[#8faaca] text-[#28477a]">Hazır</div>
    <div className="w-[741px] shrink-0 flex justify-end gap-[17px] pr-[14px]">
      <span>Ortalama: 60,67241379</span>
      <span>Say: 30</span>
      <span>Toplam: 1759,5</span>
    </div>
    <div className="w-[59px] shrink-0 h-full flex items-center pl-[1px] border-l border-[#8faaca] bg-linear-to-b from-[#b9cdeb] to-[#9db9e3]">
      <div className="w-[19px] h-[19px] flex items-center justify-center bg-linear-to-b from-[#fde9c2] to-[#fbc96f]"><svg width="14" height="12" viewBox="0 0 14 12"><path d="M.5.5h13v11H.5zM.5 4h13M.5 8h13M5 .5v11M9.5.5v11" fill="none" stroke="#5f5a4c" /></svg></div>
      <div className="w-[18px] flex justify-center"><svg width="13" height="12" viewBox="0 0 13 12"><rect x=".5" y=".5" width="12" height="11" fill="#e3e8ef" stroke="#4a5668" /><rect x="3.5" y="2.5" width="6" height="7" fill="#fff" stroke="#4a5668" /></svg></div>
      <div className="w-[18px] flex justify-center"><svg width="13" height="12" viewBox="0 0 13 12"><rect x=".5" y=".5" width="12" height="11" fill="#e3e8ef" stroke="#4a5668" /><rect x="2" y="1" width="3" height="6" fill="#4a5668" /><rect x="7" y="1" width="3" height="6" fill="#4a5668" /></svg></div>
    </div>
    <span className="w-[44px] shrink-0 pl-[7px] text-[#28477a]">%100</span>
    <div className="w-[16px] h-[16px] shrink-0 rounded-full border border-[#6e88ad] bg-linear-to-b from-[#eef3fa] to-[#b4c5dc] flex items-center justify-center"><div className="w-[8px] h-[2px] bg-[#5c6f8b]" /></div>
    <div className="relative w-[101px] shrink-0 h-px bg-[#8ba6c9]">
      <svg width="10" height="14" viewBox="0 0 10 14" className="absolute left-[44px] -top-[7px]"><path d="M.5.5h9v8L5 13.5.5 8.5z" fill="#dbe5f2" stroke="#6e88ad" /></svg>
    </div>
    <div className="w-[16px] h-[16px] shrink-0 rounded-full border border-[#6e88ad] bg-linear-to-b from-[#eef3fa] to-[#b4c5dc] flex items-center justify-center text-[#5c6f8b] text-[14px] font-bold">+</div>
  </div>
);

const Orb = () => (
  <div className="absolute left-[9px] -top-[5px] w-[42px] h-[42px] rounded-full border-2 border-[#3b4044] bg-linear-to-b from-[#8fb7d9] via-[#2e6ea8] to-[#0f3b68] flex items-center justify-center shadow-[0_0_2px_#cfe0f0]">
    <svg width="24" height="22" viewBox="0 0 24 22">
      <path d="M1 3q5-3 10 0l-1 7q-5-3-10 0z" fill="#e8542b" />
      <path d="M13 3q5 3 10 0l-1 7q-5 3-10 0z" fill="#7db63b" />
      <path d="M0 12q5-3 10 0l-1 8q-5-3-10 0z" fill="#3f9be0" />
      <path d="M12 12q5 3 10 0l-1 8q-5 3-10 0z" fill="#f4c02e" />
    </svg>
  </div>
);

const QuickIcon = ({ children }) => <div className="w-[16px] h-[16px] flex items-center justify-center shrink-0">{children}</div>;

const quick = [
  <svg key="ff" width="17" height="17" viewBox="0 0 17 17"><circle cx="8.5" cy="8.5" r="8" fill="#e4761f" /><circle cx="9" cy="8" r="4" fill="#2a5caa" /><path d="M1 8c2-6 9-8 13-3-3-1-5 0-5 3 0 4 5 4 7 2-2 6-10 8-14 3z" fill="#f09a2a" /></svg>,
  <svg key="ie" width="17" height="17" viewBox="0 0 17 17"><text x="2" y="14" fontSize="17" fontWeight="700" fontStyle="italic" fill="#2f86dc">e</text><path d="M2 15C0 12 8 2 15 1" fill="none" stroke="#e8b42e" strokeWidth="1.2" /></svg>,
  <svg key="wmp" width="17" height="17" viewBox="0 0 17 17"><rect width="17" height="17" fill="#3a8fd8" /><circle cx="8.5" cy="8.5" r="6.5" fill="#f39a1d" /><path d="M6 4.5l7 4-7 4z" fill="#fff" /></svg>,
  <svg key="desk" width="17" height="14" viewBox="0 0 17 14"><rect width="17" height="14" fill="#1f3f80" /><rect x="2" y="2" width="8" height="3" fill="#c5d6ee" /><rect x="6" y="7" width="9" height="4" fill="#e7edf7" /></svg>,
  <svg key="sw" width="16" height="16" viewBox="0 0 16 16"><rect x="3" y="0" width="13" height="13" fill="#8ba0ba" /><rect x="0" y="3" width="13" height="13" fill="#c87b3a" /><rect x="3" y="6" width="7" height="7" fill="#9bb2cf" /></svg>,
  <svg key="sk" width="16" height="17" viewBox="0 0 16 17"><path d="M1 13l5 3 1-5-4-1z" fill="#ea7a16" /><path d="M13 1c-6 0-9 2-8 5 1 2 5 2 5 4l3 1c1-4-5-4-5-6 0-1 3-1 5 0z" fill="#1c6fc4" /><rect x="11" y="0" width="5" height="4" fill="#98c6e8" /></svg>,
  <svg key="win" width="16" height="13" viewBox="0 0 16 13"><rect width="16" height="13" fill="#e8edf3" stroke="#8794a6" /><rect x="2" y="3" width="5" height="7" fill="#3d8570" /><path d="M9 4h5M9 6h5M9 8h5" stroke="#8794a6" /></svg>,
  <svg key="mess" width="17" height="15" viewBox="0 0 17 15"><circle cx="9" cy="3" r="3" fill="#3f8fd8" /><path d="M2 12c2-7 11-7 14 0z" fill="#76b54a" /><path d="M1 12c5-3 10-3 15 0l-1 3H2z" fill="#eebc3e" /></svg>,
];

const TaskBtn = ({ w, active, icon, children }) => (
  <div className={`h-[27px] mt-[2px] flex items-center gap-[6px] pl-[8px] rounded-[3px] border shrink-0 text-[11.5px] text-white whitespace-nowrap overflow-hidden ${active ? 'border-[#5e6266] bg-[#101214]' : 'border-[#4a4d50] bg-linear-to-b from-[#3c3f42] to-[#1d1f22]'}`} style={{ width: w }}>
    {icon}<span>{children}</span>
  </div>
);

const Taskbar = () => (
  <div className="relative h-[30px] flex items-center bg-linear-to-b from-[#5a5e61] via-[#3a3d40] to-[#15181b] border-t border-[#6e7276]">
    <Orb />
    <div className="flex items-center gap-[7px] ml-[65px] w-[178px]">
      {quick.map((q, i) => <QuickIcon key={i}>{q}</QuickIcon>)}
    </div>
    <span className="ml-[34px] text-white text-[11px] font-bold leading-none">»</span>
    <div className="flex gap-[3px] ml-[7px]">
      <TaskBtn w={150} icon={<svg width="15" height="15" viewBox="0 0 15 15" className="shrink-0"><rect width="15" height="15" rx="2" fill="#f1c37a" /><circle cx="8" cy="8" r="4.5" fill="#fde9b8" stroke="#c48a2e" /><path d="M5.5 7L8 9.5 10.5 7" fill="none" stroke="#a86f1c" /></svg>}>Gelen Kutusu - Mic...</TaskBtn>
      <TaskBtn w={150} icon={<svg width="15" height="15" viewBox="0 0 15 15" className="shrink-0"><rect x="2" width="13" height="13" fill="#e8927a" /><rect y="2" width="12" height="13" fill="#d0432a" /><circle cx="6" cy="8.5" r="3" fill="#fff" /></svg>}>Microsoft PowerPo...</TaskBtn>
      <TaskBtn w={151} active icon={<svg width="15" height="15" viewBox="0 0 15 15" className="shrink-0"><rect x="2" width="13" height="15" fill="#d6e9d4" /><rect y="2" width="10" height="11" fill="#2c8a3c" /><path d="M2.5 4.5l5 6M7.5 4.5l-5 6" stroke="#fff" strokeWidth="1.4" /></svg>}>Microsoft Excel - E...</TaskBtn>
    </div>
    <span className="ml-[16px] text-[12px] text-white leading-none">TR</span>
    <div className="flex items-center ml-[18px]">
      <svg width="7" height="11" viewBox="0 0 7 11"><path d="M6 1L1.5 5.5 6 10" fill="none" stroke="#dfe6ee" strokeWidth="2" /></svg>
      <svg width="14" height="15" viewBox="0 0 14 15" className="ml-[6px]"><rect width="14" height="15" rx="2" fill="#f1c37a" /><circle cx="7" cy="8" r="4" fill="#fde9b8" stroke="#c48a2e" /></svg>
      <svg width="15" height="15" viewBox="0 0 15 15" className="ml-[4px]"><rect width="15" height="15" fill="#e3762b" /><path d="M5 3c3 2-2 3 1 5M3 10h9M4 12h7" fill="none" stroke="#fff" /></svg>
      <svg width="12" height="16" viewBox="0 0 12 16" className="ml-[3px]"><path d="M2 15L9 6l3 2-6 8z" fill="#9ba0a6" /><circle cx="4" cy="4" r="3.5" fill="#d72a20" /><path d="M2.5 2.5l3 3M5.5 2.5l-3 3" stroke="#fff" /></svg>
      <svg width="15" height="15" viewBox="0 0 15 15" className="ml-[6px]"><rect x="4" y="0" width="7" height="5" fill="#2db5c8" /><rect x="3" y="5" width="9" height="8" fill="#1e2f7a" /><path d="M0 1l14 13M14 2L2 15" stroke="#e01414" strokeWidth="1.6" /></svg>
      <svg width="12" height="14" viewBox="0 0 12 14" className="ml-[3px]"><path d="M0 4h3l4-4v14l-4-4H0z" fill="#c8694a" /><path d="M9 3v8M11 2v10" stroke="#5a3a30" /></svg>
      <svg width="16" height="15" viewBox="0 0 16 15" className="ml-[6px]"><rect x=".5" y=".5" width="15" height="10" fill="#34383c" stroke="#8f9499" /><rect x="1" y="12" width="5" height="3" fill="#8f9499" /><rect x="9" y="12" width="5" height="3" fill="#8f9499" /></svg>
      <svg width="15" height="15" viewBox="0 0 15 15" className="ml-[12px]"><path d="M1 5h6v4H5v4H3V9H1z" fill="#f4f4f4" /><rect x="8" y="2" width="6" height="12" fill="#9fdcb0" stroke="#eee" /></svg>
      <svg width="15" height="15" viewBox="0 0 15 15" className="ml-[3px]"><rect x="2" y="0" width="11" height="9" fill="#1c3d86" stroke="#d6e4f6" /><circle cx="10" cy="11" r="4" fill="#2f9fd6" /><path d="M8 10h4" stroke="#6dbb3c" strokeWidth="2" /></svg>
      <svg width="13" height="13" viewBox="0 0 13 13" className="ml-[3px]"><path d="M0 4h3l4-4v13l-4-4H0z" fill="#e5e9ee" /><path d="M10 3c1 2 1 5 0 7" fill="none" stroke="#5fb76a" /></svg>
      <span className="ml-[7px] text-[11.5px] text-[#d9e8fb] leading-none">10:45</span>
    </div>
  </div>
);

export default function App() {
  return (
    <div className="w-[1024px] h-[768px] overflow-hidden bg-[#c8dbf2] text-[#2a5694]" style={font}>
      <TitleBar />
      <TabStrip />
      <Ribbon />
      <FormulaBar />
      <Sheet />
      <BottomBar />
      <StatusBar />
      <Taskbar />
    </div>
  );
}
